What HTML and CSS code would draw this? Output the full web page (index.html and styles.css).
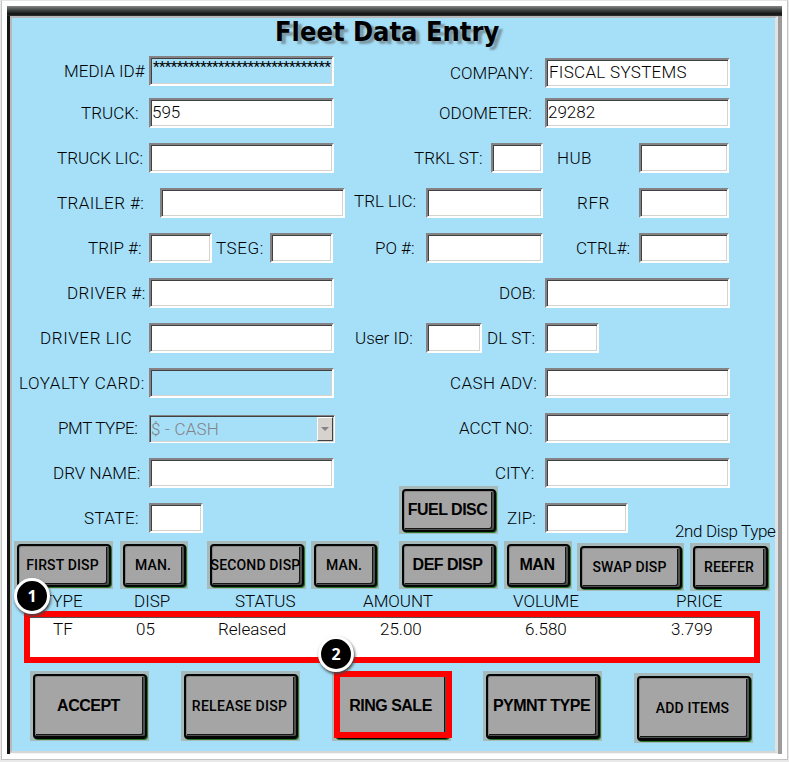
FILE: index.html
```html
<!DOCTYPE html>
<html lang="en">
<head>
  <meta charset="utf-8">
  <title>Fleet Data Entry</title>
  <link rel="stylesheet" href="styles.css">
</head>
<body>
  <div class="sheet">
    <div class="window">
      <div class="titlebar"></div>
      <div class="screen">
        <h1>Fleet Data Entry</h1>

        <div class="form">
          <div class="row media">
            <label>MEDIA ID#</label><div class="field wide locked stars">******************************</div>
            <label class="low">COMPANY:</label><div class="field wide low company">FISCAL SYSTEMS</div>
          </div>
          <div class="row truck">
            <label>TRUCK:</label><div class="field wide">595</div>
            <label>ODOMETER:</label><div class="field wide">29282</div>
          </div>
          <div class="row license">
            <label>TRUCK LIC:</label><div class="field wide"></div>
            <label>TRKL ST:</label><div class="field state"></div>
            <label class="loose">HUB</label><div class="field short"></div>
          </div>
          <div class="row trailer">
            <label class="loose">TRAILER #:</label><div class="field wide"></div>
            <label class="high">TRL LIC:</label><div class="field medium"></div>
            <label class="looser">RFR</label><div class="field short"></div>
          </div>
          <div class="row trip">
            <label>TRIP #:</label><div class="field seg"></div>
            <label class="looser">TSEG:</label><div class="field seg"></div>
            <label>PO #:</label><div class="field medium"></div>
            <label>CTRL#:</label><div class="field short"></div>
          </div>
          <div class="row driver">
            <label class="loose">DRIVER #:</label><div class="field wide"></div>
            <label>DOB:</label><div class="field wide"></div>
          </div>
          <div class="row driver-lic">
            <label class="looser">DRIVER LIC</label><div class="field wide"></div>
            <label>User ID:</label><div class="field user"></div>
            <label>DL ST:</label><div class="field tiny"></div>
          </div>
          <div class="row loyalty">
            <label class="looser">LOYALTY CARD:</label><div class="field wide locked"></div>
            <label class="loose">CASH ADV:</label><div class="field wide"></div>
          </div>
          <div class="row payment">
            <label class="tight">PMT TYPE:</label>
            <div class="select"><span>$ - CASH</span><i class="arrow"></i></div>
            <label>ACCT NO:</label><div class="field wide"></div>
          </div>
          <div class="row name">
            <label>DRV NAME:</label><div class="field wide"></div>
            <label>CITY:</label><div class="field wide"></div>
          </div>
          <div class="row address">
            <label class="loose">STATE:</label><div class="field tiny"></div>
            <button class="key big fuel"><span>FUEL DISC</span></button>
            <label>ZIP:</label><div class="field zip"></div>
            <label class="second tight">2nd Disp Type</label>
          </div>
        </div>

        <div class="keys">
          <button class="key"><span>FIRST DISP</span></button>
          <button class="key"><span>MAN.</span></button>
          <button class="key"><span>SECOND DISP</span></button>
          <button class="key"><span>MAN.</span></button>
          <button class="key big"><span>DEF DISP</span></button>
          <button class="key big"><span>MAN</span></button>
          <button class="key drop"><span>SWAP DISP</span></button>
          <button class="key drop"><span>REEFER</span></button>
        </div>

        <div class="heads">
          <span>TYPE</span><span>DISP</span><span>STATUS</span><span>AMOUNT</span><span>VOLUME</span><span>PRICE</span>
        </div>
        <div class="sale">
          <span>TF</span><span>05</span><span>Released</span><span>25.00</span><span>6.580</span><span>3.799</span>
          <b class="badge one">1</b>
        </div>

        <div class="actions">
          <button class="key big"><span>ACCEPT</span></button>
          <button class="key release"><span>RELEASE DISP</span></button>
          <div class="ring">
            <button class="key big"><span>RING SALE</span></button>
            <i class="outline"></i>
            <b class="badge two">2</b>
          </div>
          <button class="key big"><span>PYMNT TYPE</span></button>
          <button class="key drop"><span>ADD ITEMS</span></button>
        </div>
      </div>
    </div>
  </div>
</body>
</html>
```
FILE: styles.css
```css
* {
  box-sizing: border-box;
}
body {
  margin: 0;
  background: #e9e9e9;
  color: #000;
  font: 300 17px/20px Roboto, "Liberation Sans", sans-serif;
}
.sheet {
  width: 787px;
  height: 760px;
  margin-left: 1px;
  padding: 5px 0 0 5px;
  border: 1px solid #c4c4c4;
  border-top-color: #e4e4e4;
  background: #fff;
}
.window {
  width: 775px;
  height: 748px;
  border-left: 3px solid #161616;
  border-right: 4px solid #9b9b9b;
  background: #f4f4f4;
}
.titlebar {
  height: 10px;
  margin: 0 -4px 0 -3px;
  background: linear-gradient(#858585, #4a4f4c 35%, #111 80%, #333);
}
.screen {
  width: 768px;
  height: 737px;
  border: 2px solid #b8b8b8;
  border-right: 3px solid #e2e2e2;
  border-bottom-color: #d6d6d6;
  background: #a5dff8;
}
h1 {
  height: 38px;
  margin: 0;
  padding-left: 263px;
  font: bold 27px/28px "DejaVu Sans", sans-serif;
  font-stretch: condensed;
  letter-spacing: 0;
  text-shadow: 4px 3px 2px #7c98a4;
  white-space: nowrap;
}
label {
  white-space: nowrap;
}
.row {
  display: grid;
  grid-template-rows: 30px;
  align-items: center;
  height: 30px;
  margin-bottom: 15px;
}
.media { margin-bottom: 12px; padding-left: 52px; grid-template-columns: 85px 301px 95px 185px; }
.truck { padding-left: 69px; grid-template-columns: 68px 290px 106px 185px; }
.license { padding-left: 45px; grid-template-columns: 92px 265px 77px 66px 82px 90px; }
.trailer { padding-left: 45px; grid-template-columns: 103px 194px 72px 151px 62px 90px; }
.trip { padding-left: 76px; grid-template-columns: 61px 67px 54px 105px 51px 150px 63px 90px; }
.driver { padding-left: 55px; grid-template-columns: 82px 350px 46px 185px; }
.driver-lic { padding-left: 28px; grid-template-columns: 109px 206px 71px 61px 58px 54px; }
.loyalty { padding-left: 7px; grid-template-columns: 130px 301px 95px 185px; }
.payment { padding-left: 46px; grid-template-columns: 91px 310px 86px 185px; }
.name { padding-left: 41px; grid-template-columns: 96px 346px 50px 185px; }
.address { margin-bottom: 8px; padding-left: 72px; grid-template-columns: 65px 250px 108px 38px 130px 100px; }
.loose {
  letter-spacing: 0.4px;
}
.looser {
  letter-spacing: 0.6px;
}
.tight {
  letter-spacing: -0.35px;
}
.low {
  transform: translateY(2px);
}
.high {
  transform: translateY(-2px);
}
.second {
  align-self: end;
  margin-bottom: -8px;
}
.field {
  height: 30px;
  padding: 1px 2px 0 1px;
  border: 2px solid #fff;
  border-top-color: #848284;
  border-left-color: #848284;
  background: #fff;
  box-shadow: inset 1px 1px #424142, inset -1px -1px #d6d3ce;
  line-height: 22px;
  overflow: hidden;
  white-space: nowrap;
}
.wide { width: 185px; }
.medium { width: 117px; }
.short { width: 90px; }
.state { width: 52px; }
.seg { width: 63px; }
.user { width: 56px; }
.tiny { width: 54px; }
.zip { width: 83px; }
.locked {
  background: #a5dff8;
}
.stars {
  padding: 0 0 0 2px;
  font-size: 15px;
  font-weight: 400;
  line-height: 18px;
  letter-spacing: -0.55px;
}
.company {
  padding-left: 2px;
  letter-spacing: 0.3px;
}
.select {
  display: flex;
  justify-content: space-between;
  width: 186px;
  height: 28px;
  margin-top: 2px;
  padding: 0 0 0 1px;
  border: 1px solid #848284;
  border-right-color: #fff;
  border-bottom-color: #fff;
  box-shadow: inset 1px 1px #424142, inset -1px -1px #d6d3ce;
  color: #848284;
  line-height: 26px;
}
.select span {
  letter-spacing: 0.2px;
}
.arrow {
  width: 16px;
  height: 24px;
  margin: 1px 1px 0 0;
  padding: 9px 0 0 3px;
  border: 1px solid #fff;
  border-right-color: #424142;
  border-bottom-color: #424142;
  background: #d6d3ce;
}
.arrow::before {
  content: "";
  display: block;
  width: 8px;
  height: 4px;
  background: #848284;
  clip-path: polygon(0 0, 100% 0, 50% 100%);
}
.key {
  height: 48px;
  padding: 3px 2px 2px 3px;
  border: 0;
  background: #a6b9bb;
  color: #000;
  font: 500 14px/20px Roboto, sans-serif;
}
.key span {
  display: flex;
  align-items: center;
  justify-content: center;
  height: 100%;
  padding: 0 3px 1px 0;
  border: 2px solid #050505;
  border-radius: 4px;
  background: #a5a5a5;
  box-shadow: inset 1px 1px #888, inset -2px -1px #4d524f, inset -3px -2px #161616, 1px 1px #28762a;
  letter-spacing: 0.15px;
  white-space: nowrap;
}
.big {
  font: bold 16px/20px "Liberation Sans", sans-serif;
}
.big span {
  letter-spacing: -0.5px;
}
.drop {
  transform: translateY(2px);
}
.fuel {
  align-self: end;
  width: 99px;
  margin-bottom: -1px;
}
.keys {
  display: grid;
  grid-template-columns: 106px 87px 104px 88px 105px 73px 113px 80px;
  height: 48px;
  padding-left: 2px;
}
.keys .key:nth-child(odd) {
  width: 99px;
}
.keys .key:nth-child(even) {
  width: 68px;
}
.keys .key:nth-child(7) {
  width: 107px;
}
.keys .key:nth-child(8) {
  width: 80px;
}
.heads, .sale {
  display: grid;
  grid-template-columns: 92px 101px 128px 150px 163px 80px;
}
.heads {
  height: 22px;
  padding: 2px 0 0 30px;
}
.sale {
  position: relative;
  width: 736px;
  height: 52px;
  margin-left: 12px;
  padding: 2px 0 0 23px;
  border: 6px solid #f00;
  background: #fff;
  box-shadow: inset 0 1px #555;
  grid-template-columns: 83px 82px 162px 145px 146px 60px;
}
.badge {
  position: absolute;
  width: 36px;
  height: 36px;
  border: 3px solid #fff;
  border-radius: 50%;
  background: #000;
  box-shadow: 1px 2px 3px #444;
  color: #fff;
  font: bold 16px/30px "Open Sans", sans-serif;
  text-align: center;
}
.one {
  left: -16px;
  top: -39px;
}
.two {
  left: -14px;
  top: -35px;
}
.actions {
  display: grid;
  grid-template-columns: 119px 119px 119px 119px 119px;
  column-gap: 32px;
  height: 70px;
  margin-top: 8px;
  padding-left: 18px;
}
.actions .key {
  width: 119px;
  height: 70px;
}
.actions .key span {
  border-bottom-width: 3px;
}
.actions .release span {
  letter-spacing: 0.3px;
}
.ring {
  position: relative;
}
.outline {
  position: absolute;
  left: 2px;
  top: 0;
  width: 118px;
  height: 67px;
  border: 6px solid #f00;
}
```
